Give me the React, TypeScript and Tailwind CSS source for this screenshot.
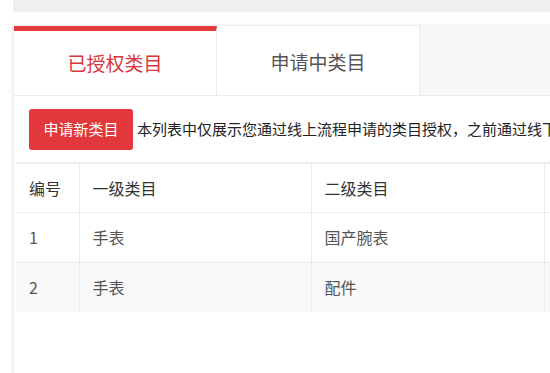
const rows = [
  { id: 1, first: '手表', second: '国产腕表' },
  { id: 2, first: '手表', second: '配件' },
];

export default function App() {
  return (
    <div
      className="h-[373px] w-[550px] overflow-hidden bg-white"
      style={{ fontFamily: '"Noto Sans CJK SC", "Noto Sans", sans-serif' }}
    >
      {/* top strip */}
      <div className="ml-[13px] h-[12px] bg-[#efefef]" />

      <div className="ml-[14px] mt-[13px] w-[560px] border-t border-[#f0f0f0] shadow-[-2px_0_3px_rgba(0,0,0,0.08)]">
        {/* tabs */}
        <div className="flex h-[70px] border-b border-[#ebebeb] bg-[#f7f7f7]">
          <div className="flex w-[203px] items-center justify-center border-t-[5px] border-r border-r-[#ebebeb] border-t-[#e53a3c] bg-white text-[19px] text-[#d9363b]">
            已授权类目
          </div>
          <div className="flex w-[203px] items-center justify-center border-r border-[#ebebeb] bg-white pt-[3px] text-[19px] text-[#555]">
            申请中类目
          </div>
        </div>

        {/* panel */}
        <div className="min-h-[278px] bg-white pl-[2px]">
          <div className="flex items-center gap-[4px] pl-[13px] pt-[13px] whitespace-nowrap">
            <button className="h-[41px] w-[104px] shrink-0 rounded-[3px] bg-[#e3383b] text-[15px] text-white">
              申请新类目
            </button>
            <span className="text-[15px] text-[#222]">
              本列表中仅展示您通过线上流程申请的类目授权，之前通过线下流程申请的类目授权请联系客服查询
            </span>
          </div>

          <table className="mt-[12px] w-[560px] table-fixed border-collapse text-[16px]">
            <colgroup>
              <col className="w-[63px]" />
              <col className="w-[232px]" />
              <col className="w-[233px]" />
              <col />
            </colgroup>
            <thead>
              <tr className="h-[49px] border-t-2 border-[#f0f0f0] text-left text-[#333]">
                <th className="border-r border-[#ececec] pl-[13px] font-normal">编号</th>
                <th className="border-r border-[#ececec] pl-[13px] font-normal">一级类目</th>
                <th className="border-r border-[#ececec] pl-[13px] font-normal">二级类目</th>
                <th />
              </tr>
            </thead>
            <tbody className="text-[#555]">
              {rows.map((r, i) => (
                <tr
                  key={r.id}
                  className={`h-[50px] border-t border-[#ececec] ${i % 2 === 1 ? 'bg-[#f9f9f9]' : 'bg-white'}`}
                >
                  <td className="border-r border-[#ececec] pl-[13px]">{r.id}</td>
                  <td className="border-r border-[#ececec] pl-[13px]">{r.first}</td>
                  <td className="border-r border-[#ececec] pl-[13px]">{r.second}</td>
                  <td />
                </tr>
              ))}
            </tbody>
          </table>
        </div>
      </div>
    </div>
  );
}
